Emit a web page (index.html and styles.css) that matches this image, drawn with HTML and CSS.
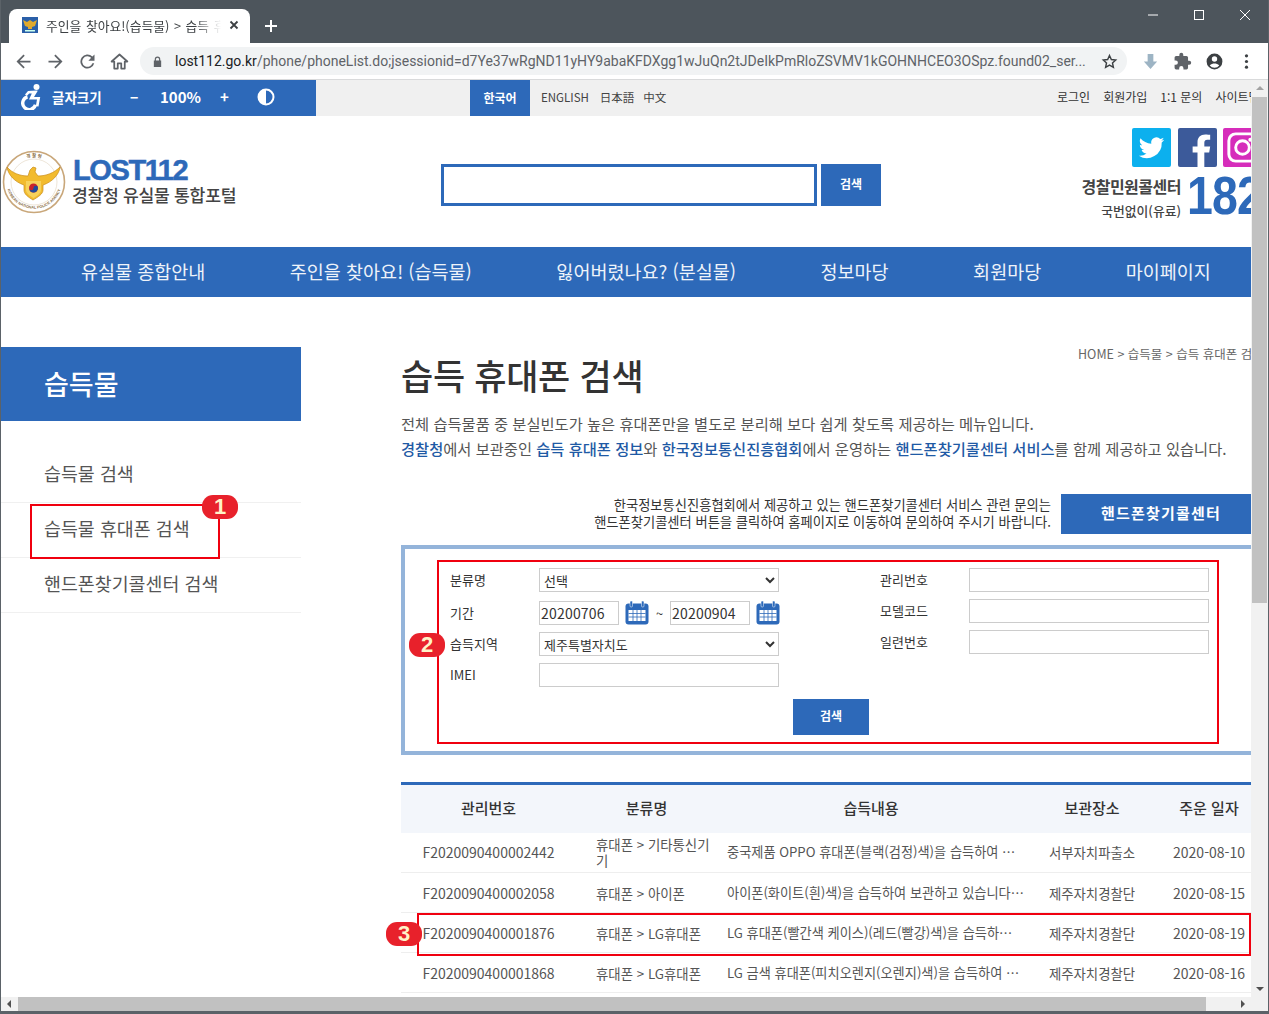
FILE: index.html
```html
<!DOCTYPE html>
<html lang="ko">
<head>
<meta charset="utf-8">
<title>LOST112</title>
<link rel="stylesheet" href="styles.css">
</head>
<body>
<div class="window">
  <div class="titlebar">
    <div class="tab">
      <svg class="favicon" viewBox="0 0 16 16"><rect width="16" height="16" fill="#2a5fa8"/><path d="M1 3l4 2 3-2 3 2 4-2-2 6-3 1v2H6v-2L3 9z" fill="#e0a92c"/><rect x="3" y="13" width="10" height="1.500" fill="#cfe"/></svg>
      <span class="tab-title">주인을 찾아요!(습득물) &gt; 습득 휴대폰 검색</span>
      <svg class="tab-close" viewBox="0 0 10 10"><path d="M1.500 1.500l7 7M8.500 1.500l-7 7" stroke="#3c4043" stroke-width="1.800"/></svg>
    </div>
    <svg class="new-tab" viewBox="0 0 12 12"><path d="M6 0v12M0 6h12" stroke="#fff" stroke-width="2"/></svg>
    <div class="win-controls">
      <svg viewBox="0 0 12 12"><path d="M1 6h10" stroke="#fff"/></svg>
      <svg viewBox="0 0 12 12"><rect x="1.500" y="1.500" width="9" height="9" fill="none" stroke="#fff"/></svg>
      <svg viewBox="0 0 12 12"><path d="M1 1l10 10M11 1L1 11" stroke="#fff"/></svg>
    </div>
  </div>
  <div class="toolbar">
    <svg class="tool" viewBox="0 0 24 24"><path d="M20 11H7.800l5.600-5.600L12 4l-8 8 8 8 1.400-1.400L7.800 13H20z" fill="#5f6368"/></svg>
    <svg class="tool" viewBox="0 0 24 24"><path d="M4 11h12.200l-5.600-5.600L12 4l8 8-8 8-1.400-1.400 5.600-5.600H4z" fill="#5f6368"/></svg>
    <svg class="tool" viewBox="0 0 24 24"><path d="M17.600 6.400A8 8 0 1 0 19.700 14h-2.100a6 6 0 1 1-1.400-6.200L13 11h7V4z" fill="#5f6368"/></svg>
    <svg class="tool" viewBox="0 0 24 24"><path d="M12 4l9 8h-3v8h-4v-6h-4v6H6v-8H3z" fill="none" stroke="#5f6368" stroke-width="2" stroke-linejoin="round"/></svg>
    <div class="omnibox">
      <svg class="lock" viewBox="0 0 12 12"><path d="M3 5V3.500a3 3 0 0 1 6 0V5h1v7H2V5zm1.300 0h3.400V3.500a1.700 1.700 0 0 0-3.400 0z" fill="#5f6368"/></svg>
      <span class="url"><b>lost112.go.kr</b>/phone/phoneList.do;jsessionid=d7Ye37wRgND11yHY9abaKFDXgg1wJuQn2tJDeIkPmRloZSVMV1kGOHNHCEO3OSpz.found02_ser...</span>
      <svg class="star" viewBox="0 0 24 24"><path d="M12 3.500l2.600 5.700 6.200.7-4.600 4.200 1.300 6.100L12 17.100l-5.500 3.100 1.300-6.100-4.600-4.200 6.200-.7z" fill="none" stroke="#3c4043" stroke-width="2"/></svg>
    </div>
    <svg class="ext" viewBox="0 0 20 20"><path d="M7 2h6v8h4l-7 8-7-8h4z" fill="#9db4c4"/></svg>
    <svg class="ext" viewBox="0 0 24 24"><path d="M20.500 11H19V7a2 2 0 0 0-2-2h-4V3.500a2.500 2.500 0 0 0-5 0V5H4a2 2 0 0 0-2 2v3.800h1.500a2.700 2.700 0 0 1 0 5.400H2V20a2 2 0 0 0 2 2h3.800v-1.500a2.700 2.700 0 0 1 5.400 0V22H17a2 2 0 0 0 2-2v-4h1.500a2.500 2.500 0 0 0 0-5z" fill="#5f6368"/></svg>
    <svg class="ext" viewBox="0 0 24 24"><path d="M12 2a10 10 0 1 0 0 20 10 10 0 0 0 0-20zm0 3.500a3.400 3.400 0 1 1 0 6.800 3.400 3.400 0 0 1 0-6.800zm0 14.400a7.700 7.700 0 0 1-6-2.900c1.700-1.700 3.900-2.400 6-2.400s4.300.7 6 2.400a7.700 7.700 0 0 1-6 2.900z" fill="#3c4043"/></svg>
    <svg class="ext" viewBox="0 0 20 20"><circle cx="10" cy="4" r="1.700" fill="#3c4043"/><circle cx="10" cy="10" r="1.700" fill="#3c4043"/><circle cx="10" cy="16" r="1.700" fill="#3c4043"/></svg>
  </div>
  <div class="viewport">
    <div class="page-clip">
      <div class="page">
        <div class="topbar">
          <div class="a11y">
            <svg class="wheel" viewBox="0 0 22 26"><circle cx="15.500" cy="3" r="3" fill="#fff"/><path d="M15.500 6.500L7 7l-3 3.500 1.800 1.600 2.400-2.700h2.600L8 15.500l8 .1-1.200 6.600 2.700.4 1.700-9.500-6.200-.2 3.800-6.200z" fill="#fff"/><path d="M6.500 12.800a6.500 6.500 0 1 0 8 8" fill="none" stroke="#fff" stroke-width="3.400"/></svg>
            <span class="a11y-label">글자크기</span>
            <span class="a11y-minus">−</span>
            <span class="a11y-pct">100%</span>
            <span class="a11y-plus">+</span>
            <svg class="contrast" viewBox="0 0 18 18"><circle cx="9" cy="9" r="7.500" fill="none" stroke="#fff" stroke-width="2"/><path d="M9 1.500a7.500 7.500 0 0 0 0 15z" fill="#fff"/></svg>
          </div>
          <div class="langs">
            <span class="lang-on">한국어</span>
            <span class="lang">ENGLISH</span>
            <span class="lang">日本語</span>
            <span class="lang">中文</span>
          </div>
          <div class="toplinks">
            <span>로그인</span><span>회원가입</span><span>1:1 문의</span><span>사이트맵</span>
          </div>
        </div>
        <header class="header">
          <div class="logo">
            <svg class="emblem" viewBox="0 0 64 64">
              <defs>
                <path id="ring-top" d="M9 30A23 23 0 0 1 55 30"/>
                <path id="ring-bottom" d="M4.500 36A28 28 0 0 0 59.500 36"/>
              </defs>
              <circle cx="32" cy="32" r="30.500" fill="#fff" stroke="#c9a77a" stroke-width="1.600"/>
              <circle cx="32" cy="32" r="23" fill="#fff" stroke="#e0d3bd" stroke-width=".6"/>
              <text class="ring-ko"><textPath href="#ring-top" startOffset="50%" text-anchor="middle">경 찰 청</textPath></text>
              <text class="ring-en"><textPath href="#ring-bottom" startOffset="50%" text-anchor="middle">KOREAN NATIONAL POLICE AGENCY</textPath></text>
              <path d="M5 17C10 23 18 26 26 26L28 20 31 17 34 18 33 22 36 26C44 26 52 23 58 17 57 25 50 32 41 35L41 40C41 44 36 47 31 50 26 47 22 44 22 40L22 35C13 32 6 25 5 17Z" fill="#f2bb2e" stroke="#c98c1a" stroke-width=".7"/>
              <path d="M24 31h15v9c0 3-4 6-7.500 8-3.500-2-7.500-5-7.500-8z" fill="#f7d25c"/>
              <circle cx="31.500" cy="38" r="4.500" fill="#c8232c"/>
              <path d="M27 38a2.250 2.250 0 0 0 4.500 0 2.250 2.250 0 0 1 4.500 0 4.500 4.500 0 0 1-9 0z" fill="#1f4c9c"/>
            </svg>
            <div class="logo-text">
              <span class="logo-main">LOST112</span>
              <span class="logo-sub">경찰청 유실물 통합포털</span>
            </div>
          </div>
          <div class="site-search">
            <input class="site-input" type="text" aria-label="검색어">
            <button class="site-btn">검색</button>
          </div>
          <div class="header-right">
            <div class="socials">
              <svg class="social" viewBox="0 0 40 40"><rect width="40" height="40" rx="2" fill="#0cb0ee"/><path d="M33 12c-1 .5-2 .8-3 1 1-.7 2-1.800 2.400-3-1 .6-2.200 1-3.400 1.300a5.400 5.400 0 0 0-9.200 4.900C15.400 16 11.400 13.900 8.700 10.600c-1.400 2.500-.7 5.600 1.700 7.200-.9 0-1.700-.3-2.400-.7 0 2.600 1.800 4.800 4.300 5.300-.8.200-1.600.3-2.400.1.700 2.200 2.700 3.700 5 3.700A10.800 10.800 0 0 1 7 28.500a15.300 15.300 0 0 0 23.500-13.600c1-.7 1.800-1.700 2.500-2.900z" fill="#fff"/></svg>
              <svg class="social" viewBox="0 0 40 40"><rect width="40" height="40" rx="2" fill="#3c5a9a"/><path d="M27 40V25h5l1-6h-6v-4c0-2 1-3 3-3h3V7c-1 0-3-.300-5-.300-5 0-8 3-8 8V19h-5v6h5v15z" fill="#fff"/></svg>
              <svg class="social" viewBox="0 0 40 40"><rect width="40" height="40" rx="2" fill="#d62dbb"/><rect x="6" y="6" width="28" height="28" rx="7" fill="none" stroke="#fff" stroke-width="3"/><circle cx="20" cy="20" r="7" fill="none" stroke="#fff" stroke-width="3"/><circle cx="28" cy="12" r="2" fill="#fff"/></svg>
            </div>
            <div class="callcenter">
              <div class="call-text">
                <span class="call-main">경찰민원콜센터</span>
                <span class="call-sub">국번없이(유료)</span>
              </div>
              <span class="call-num">182</span>
            </div>
          </div>
        </header>
        <nav class="gnb">
          <a>유실물 종합안내</a>
          <a>주인을 찾아요! (습득물)</a>
          <a>잃어버렸나요? (분실물)</a>
          <a>정보마당</a>
          <a>회원마당</a>
          <a>마이페이지</a>
        </nav>
        <div class="layout">
          <aside class="side">
            <h2 class="side-title">습득물</h2>
            <ul class="side-menu">
              <li>습득물 검색</li>
              <li>습득물 휴대폰 검색</li>
              <li>핸드폰찾기콜센터 검색</li>
            </ul>
          </aside>
          <main class="main">
            <div class="crumb">HOME &gt; 습득물 &gt; 습득 휴대폰 검색</div>
            <h1 class="page-title">습득 휴대폰 검색</h1>
            <p class="desc">전체 습득물품 중 분실빈도가 높은 휴대폰만을 별도로 분리해 보다 쉽게 찾도록 제공하는 메뉴입니다.</p>
            <p class="desc"><b>경찰청</b>에서 보관중인 <b>습득 휴대폰 정보</b>와 <b>한국정보통신진흥협회</b>에서 운영하는 <b>핸드폰찾기콜센터 서비스</b>를 함께 제공하고 있습니다.</p>
            <div class="notice">
              <p class="notice-text">한국정보통신진흥협회에서 제공하고 있는 핸드폰찾기콜센터 서비스 관련 문의는<br>핸드폰찾기콜센터 버튼을 클릭하여 홈페이지로 이동하여 문의하여 주시기 바랍니다.</p>
              <button class="notice-btn">핸드폰찾기콜센터</button>
            </div>
            <form class="search-box">
              <div class="form-cols">
                <div class="col-left">
                  <div class="f-row"><label>분류명</label><select class="ctl pick"><option>선택</option></select></div>
                  <div class="f-row"><label>기간</label>
                    <input class="ctl date" value="20200706">
                    <svg class="cal" viewBox="0 0 24 24"><rect x="0.500" y="2.500" width="23" height="21" rx="3" fill="#2d69b9"/><rect x="3.500" y="9" width="17" height="11" fill="#fff"/><path d="M3.500 12.500h17M3.500 16h17M8 9v11M12 9v11M16 9v11" stroke="#2d69b9" stroke-width=".8"/><rect x="5" y="0" width="2.500" height="6" rx="1" fill="#2d69b9" stroke="#fff" stroke-width=".5"/><rect x="16.500" y="0" width="2.500" height="6" rx="1" fill="#2d69b9" stroke="#fff" stroke-width=".5"/></svg>
                    <span class="tilde">~</span>
                    <input class="ctl date" value="20200904">
                    <svg class="cal" viewBox="0 0 24 24"><rect x="0.500" y="2.500" width="23" height="21" rx="3" fill="#2d69b9"/><rect x="3.500" y="9" width="17" height="11" fill="#fff"/><path d="M3.500 12.500h17M3.500 16h17M8 9v11M12 9v11M16 9v11" stroke="#2d69b9" stroke-width=".8"/><rect x="5" y="0" width="2.500" height="6" rx="1" fill="#2d69b9" stroke="#fff" stroke-width=".5"/><rect x="16.500" y="0" width="2.500" height="6" rx="1" fill="#2d69b9" stroke="#fff" stroke-width=".5"/></svg>
                  </div>
                  <div class="f-row"><label>습득지역</label><select class="ctl pick"><option>제주특별자치도</option></select></div>
                  <div class="f-row"><label>IMEI</label><input class="ctl"></div>
                </div>
                <div class="col-right">
                  <div class="f-row"><label>관리번호</label><input class="ctl"></div>
                  <div class="f-row"><label>모델코드</label><input class="ctl"></div>
                  <div class="f-row"><label>일련번호</label><input class="ctl"></div>
                </div>
              </div>
              <button class="form-btn" type="button">검색</button>
            </form>
            <table class="result">
              <thead>
                <tr><th class="c1">관리번호</th><th class="c2">분류명</th><th class="c3">습득내용</th><th class="c4">보관장소</th><th class="c5">주운 일자</th></tr>
              </thead>
              <tbody>
                <tr><td class="c1">F2020090400002442</td><td class="c2">휴대폰 &gt; 기타통신기기</td><td class="c3"><div class="ell">중국제품 OPPO 휴대폰(블랙(검정)색)을 습득하여 ⋯</div></td><td class="c4">서부자치파출소</td><td class="c5">2020-08-10</td></tr>
                <tr><td class="c1">F2020090400002058</td><td class="c2">휴대폰 &gt; 아이폰</td><td class="c3"><div class="ell">아이폰(화이트(흰)색)을 습득하여 보관하고 있습니다⋯</div></td><td class="c4">제주자치경찰단</td><td class="c5">2020-08-15</td></tr>
                <tr><td class="c1">F2020090400001876</td><td class="c2">휴대폰 &gt; LG휴대폰</td><td class="c3"><div class="ell">LG 휴대폰(빨간색 케이스)(레드(빨강)색)을 습득하⋯</div></td><td class="c4">제주자치경찰단</td><td class="c5">2020-08-19</td></tr>
                <tr><td class="c1">F2020090400001868</td><td class="c2">휴대폰 &gt; LG휴대폰</td><td class="c3"><div class="ell">LG 금색 휴대폰(피치오렌지(오렌지)색)을 습득하여 ⋯</div></td><td class="c4">제주자치경찰단</td><td class="c5">2020-08-16</td></tr>
              </tbody>
            </table>
          </main>
        </div>
      </div>
      <div class="mark mark-1"></div>
      <div class="mark mark-2"></div>
      <div class="mark mark-3"></div>
      <span class="badge badge-1">1</span>
      <span class="badge badge-2">2</span>
      <span class="badge badge-3">3</span>
    </div>
    <div class="vscroll">
      <span class="arrow-up"></span>
      <div class="vthumb"></div>
      <span class="arrow-down"></span>
    </div>
  </div>
  <div class="hscroll">
    <span class="arrow-left"></span>
    <div class="hthumb"></div>
    <span class="arrow-right"></span>
  </div>
</div>
</body>
</html>
```

FILE: styles.css
```css
* { box-sizing: border-box; }
html, body { margin: 0; padding: 0; overflow: hidden; }
body { font-family: "Noto Sans CJK KR", "Noto Sans", sans-serif; color: #333; background: #fff; }
.window { width: 1269px; height: 1014px; display: flex; flex-direction: column; border-left: 1px solid #5b6268; border-right: 1px solid #5b6268; border-bottom: 3px solid #5b6268; overflow: hidden; }

.titlebar { height: 43px; background: #4d555c; display: flex; align-items: flex-end; padding-left: 8px; flex: none; position: relative; }
.tab { width: 241px; height: 34px; background: #fff; border-radius: 8px 8px 0 0; display: flex; align-items: center; padding: 0 8px 2px 13px; gap: 8px; }
.favicon { width: 16px; height: 16px; flex: none; }
.tab-title { flex: 1; font-size: 12.800px; word-spacing: 1px; white-space: nowrap; overflow: hidden; color: #3c4043; -webkit-mask-image: linear-gradient(90deg, #000 85%, transparent); mask-image: linear-gradient(90deg, #000 85%, transparent); }
.tab-close { width: 10px; height: 10px; flex: none; margin-right: 3px; }
.new-tab { width: 12px; height: 12px; margin: 0 0 11px 15px; }
.win-controls { margin-left: auto; align-self: flex-start; display: flex; gap: 34px; padding: 9px 17px 0 0; }
.win-controls svg { width: 12px; height: 12px; }

.toolbar { height: 37px; background: #fff; border-bottom: 1px solid #d9dadb; flex: none; display: flex; align-items: center; padding-left: 12px; }
.tool { width: 21px; height: 21px; margin-right: 11px; flex: none; }
.tool:nth-child(4) { margin-right: 10px; }
.omnibox { width: 987px; height: 28px; border-radius: 14px; background: #f1f3f4; display: flex; align-items: center; padding: 0 9px 0 12px; flex: none; }
.lock { width: 11px; height: 11px; flex: none; }
.url { flex: 1; margin-left: 12px; font: 14px "Roboto", sans-serif; color: #5f6368; white-space: nowrap; overflow: hidden; }
.url b { font-weight: 400; color: #202124; }
.star { width: 17px; height: 17px; flex: none; margin-left: 12px; }
.ext { width: 19px; height: 19px; flex: none; margin-left: 13px; }
.omnibox + .ext { margin-left: 14px; }

.viewport { flex: 1; display: flex; min-height: 0; }
.page-clip { flex: 1; position: relative; overflow: hidden; background: #fff; }
.page { width: 1270px; }

.topbar { height: 36px; background: #f0f0f0; display: flex; align-items: center; }
.a11y { width: 315px; height: 36px; background: #2d69b9; color: #fff; display: flex; align-items: center; font-weight: 700; font-size: 13.500px; padding: 0 0 3px 20px; flex: none; }
.wheel { width: 22px; height: 26px; flex: none; }
.a11y-label { margin-left: 9px; width: 78px; white-space: nowrap; }
.a11y-minus { width: 30px; font-size: 14px; }
.a11y-pct { width: 60px; font-size: 15px; }
.a11y-plus { width: 37px; font-size: 15px; }
.contrast { width: 18px; height: 18px; }
.langs { margin-left: 154px; display: flex; align-items: center; height: 36px; font-size: 11.500px; color: #444; }
.lang-on { width: 60px; height: 36px; background: #2d69b9; color: #fff; font-weight: 700; font-size: 12px; display: flex; align-items: center; justify-content: center; margin-right: 11px; padding-bottom: 2px; }
.lang { margin-right: 11px; padding-bottom: 2px; }
.lang:nth-child(3) { margin-right: 9px; }
.toplinks { margin-left: auto; width: 213px; display: flex; gap: 13px; font-size: 12px; color: #333; white-space: nowrap; overflow: hidden; flex: none; margin-right: 1px; padding-bottom: 3px; }

.header { height: 131px; display: flex; position: relative; }
.logo { width: 440px; display: flex; align-items: center; padding: 1px 0 0 1px; flex: none; }
.emblem { width: 64px; height: 64px; flex: none; }
.ring-ko { font: 700 4.500px "Noto Sans CJK KR", sans-serif; fill: #8a6d43; }
.ring-en { font: 700 3.800px "Liberation Sans", sans-serif; fill: #8a6d43; }
.logo-text { display: flex; flex-direction: column; margin-left: 7px; margin-top: -4px; }
.logo-main { font: 700 29px/28px "Liberation Sans", sans-serif; padding-top: 1px; color: #2d69b9; letter-spacing: -1.400px; -webkit-text-stroke: .5px #2d69b9; }
.logo-sub { font-size: 17.200px; line-height: 21px; margin-left: -1px; font-weight: 500; color: #444; letter-spacing: -.3px; white-space: nowrap; }
.site-search { display: flex; gap: 4px; padding-top: 48px; flex: none; }
.site-input { width: 376px; height: 42px; border: 3px solid #2d69b9; background: #fff; }
.site-btn { width: 60px; height: 42px; border: 0; background: #2d69b9; color: #fff; font: 700 12px "Noto Sans CJK KR", sans-serif; padding: 0 0 3px; }
.header-right { margin-left: auto; width: 190px; flex: none; padding-top: 12px; }
.socials { display: flex; gap: 6px; padding-left: 51px; overflow: hidden; }
.social { width: 39px; height: 39px; flex: none; }
.social:first-child { margin-right: 1px; }
.callcenter { display: flex; margin-top: 6px; }
.call-text { display: flex; flex-direction: column; align-items: flex-end; width: 100px; flex: none; }
.call-main { font-size: 16px; line-height: 26px; font-weight: 700; color: #444; letter-spacing: -.5px; white-space: nowrap; }
.call-sub { font-size: 12.800px; line-height: 20px; font-weight: 500; color: #444; white-space: nowrap; margin-top: 2px; }
.call-num { font: 700 54px/50px "Liberation Sans", sans-serif; color: #2d69b9; margin: -3px 0 0 6px; letter-spacing: -1px; transform: scaleX(.86); transform-origin: left; white-space: nowrap; }

.gnb { height: 50px; background: #2d69b9; display: flex; gap: 84.500px; padding: 0 0 2px 80px; align-items: center; color: #eef3fa; font-size: 18.500px; white-space: nowrap; }

.layout { display: flex; padding-top: 50px; }
.side { width: 300px; flex: none; margin-right: 100px; }
.side-title { margin: 0; height: 74px; background: #2d69b9; color: #fff; font-size: 27px; font-weight: 500; line-height: 74px; padding-left: 43px; }
.side-menu { list-style: none; margin: 27px 0 0; padding: 0; }
.side-menu li { height: 55px; line-height: 51px; padding-left: 43px; font-size: 18.400px; color: #555; border-bottom: 1px solid #f0f0f0; }

.main { width: 858px; flex: none; position: relative; }
.crumb { position: absolute; left: 677px; top: -1px; font-size: 12.500px; line-height: 16px; color: #666; white-space: nowrap; }
.page-title { margin: 0 0 8px; font-size: 35px; line-height: 56px; font-weight: 500; color: #333; letter-spacing: -.3px; }
.desc { margin: 0; font-size: 15.300px; line-height: 25px; color: #555; white-space: nowrap; }
.desc b { font-weight: 500; color: #1f5aa5; }
.notice { display: flex; justify-content: flex-end; margin-top: 33px; width: 860px; gap: 10px; align-items: center; }
.notice-text { margin: 0 0 3px; font-size: 13.270px; line-height: 17px; text-align: right; color: #333; white-space: nowrap; }
.notice-btn { width: 200px; height: 40px; border: 0; background: #2d69b9; color: #fff; font: 700 15px "Noto Sans CJK KR", sans-serif; letter-spacing: 1.200px; padding: 0 0 3px; flex: none; }

.search-box { margin-top: 11px; height: 210px; width: 860px; border: 4px solid #94b4da; padding: 19px 0 0 45px; }
.form-cols { display: flex; }
.col-left { width: 430px; flex: none; }
.f-row { display: flex; align-items: center; height: 24px; margin-bottom: 7px; }
.f-row label { width: 89px; font-size: 13px; color: #333; flex: none; padding-bottom: 2px; }
.ctl { width: 240px; height: 24px; border: 1px solid #ccc; background: #fff; font: 13px "Noto Sans CJK KR", sans-serif; color: #333; padding: 0 0 0 4px; border-radius: 0; }
.pick { padding-left: 0; }
.col-left .f-row:nth-child(2) { margin-top: 9px; }
.col-left .f-row:nth-child(1) { margin-bottom: 0; }
.date { width: 80px; font-size: 14px; padding-left: 1px; letter-spacing: .2px; }
.cal { width: 24px; height: 24px; flex: none; margin-left: 6px; }
.tilde { width: 21px; text-align: center; font-size: 13px; }
.form-btn { display: block; width: 76px; height: 36px; border: 0; background: #2d69b9; color: #fff; font: 700 12px "Noto Sans CJK KR", sans-serif; margin: 5px 0 0 343px; padding: 0 0 3px; }

.result { margin-top: 27px; width: 858px; border-collapse: collapse; table-layout: fixed; border-top: 3px solid #2d69b9; }
.result th { height: 49px; background: #f3f6fb; font-size: 15px; font-weight: 500; color: #333; text-align: center; padding: 0 0 3px; }
.result td { height: 40px; font-size: 13.400px; color: #555; border-bottom: 1px solid #eee; padding: 0; line-height: 16px; }
.c1 { width: 175px; }
.c2 { width: 141px; }
.c3 { width: 308px; }
.c4 { width: 134px; }
.c5 { width: 100px; }
td.c1, td.c4, td.c5 { text-align: center; }
.result td.c1, .result td.c5 { font-size: 14px; }
.result td.c2 { padding-left: 20px; padding-right: 6px; }
.result td.c3 { padding-left: 10px; }
.ell { white-space: nowrap; font-size: 13.200px; }

.mark { position: absolute; border: 2px solid #f0000f; pointer-events: none; }
.mark-1 { left: 29px; top: 424px; width: 190px; height: 55px; }
.mark-2 { left: 436px; top: 480px; width: 782px; height: 184px; }
.mark-3 { left: 416px; top: 833px; width: 834px; height: 43px; }
.badge { position: absolute; width: 36px; height: 24px; border-radius: 11px; background: #e8212b; color: #fff3c8; font: 700 22px/24px "Liberation Sans", sans-serif; text-align: center; }
.badge-1 { left: 201px; top: 415px; }
.badge-2 { left: 408px; top: 553px; }
.badge-3 { left: 385px; top: 842px; }

.vscroll { width: 17px; flex: none; background: #f1f1f1; display: flex; flex-direction: column; align-items: center; }
.vthumb { width: 15px; height: 506px; background: #c1c1c1; }
.arrow-up { width: 0; height: 0; border: 4px solid transparent; border-top: 0; border-bottom: 4px solid #a3a3a3; margin: 6px 0 7px; }
.arrow-down { width: 0; height: 0; border: 4px solid transparent; border-bottom: 0; border-top: 4px solid #505050; margin-top: auto; margin-bottom: 6px; }
.hscroll { height: 14px; flex: none; background: #f1f1f1; display: flex; align-items: center; }
.hthumb { width: 1188px; height: 14px; background: #c1c1c1; margin-left: 7px; }
.arrow-left { width: 0; height: 0; border: 4px solid transparent; border-left: 0; border-right: 4px solid #505050; margin-left: 6px; }
.arrow-right { width: 0; height: 0; border: 4px solid transparent; border-right: 0; border-left: 4px solid #505050; margin-left: 35px; }
```
